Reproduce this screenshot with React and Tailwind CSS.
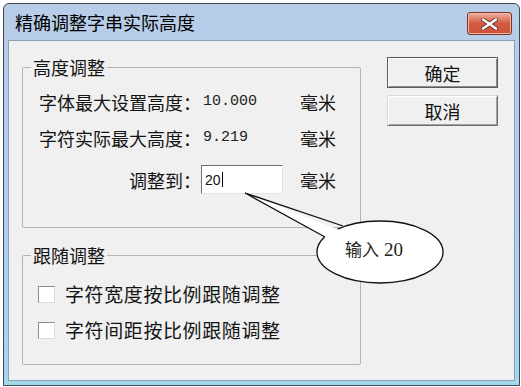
import React from "react";

const CloseX = () => (
  <svg width="17" height="12" viewBox="0 0 17 12">
    <path d="M2 1.5 L15 10.5 M15 1.5 L2 10.5" stroke="#6b3a33" strokeWidth="4.2" strokeLinecap="round" />
    <path d="M2 1.5 L15 10.5 M15 1.5 L2 10.5" stroke="#ffffff" strokeWidth="2.4" strokeLinecap="round" />
  </svg>
);

const Row = ({ label, value, className }) => (
  <div className={`flex items-center h-[24px] ${className}`}>
    <div className="w-[170px] text-right">{label}</div>
    <div className="w-[99px] pl-[2px] font-['Liberation_Mono',monospace] text-[15px] text-[#222]">{value}</div>
    <div>毫米</div>
  </div>
);

const Check = ({ label, className }) => (
  <div className={`flex items-center h-[24px] ml-[7px] ${className}`}>
    <div className="w-[17px] h-[17px] bg-white border border-t-[#8c8c8c] border-l-[#8c8c8c] border-r-[#dcdcdc] border-b-[#dcdcdc]" />
    <span className="ml-[10px] text-[19px] tracking-[0.6px]">{label}</span>
  </div>
);

export default function App() {
  return (
    <div className="relative w-[521px] h-[387px] bg-white pt-[3px] pl-[3px] font-['Noto_Sans_CJK_SC',sans-serif] text-[18px] text-[#141414] leading-[24px]">
      <div className="w-[517px] h-[383px] flex flex-col border border-[#3e4752] rounded-t-[6px] bg-linear-to-b from-[#b7cde8] via-[#b4cdea] to-[#a3d8ea] px-[4px] pb-[4px]">
        {/* title bar */}
        <div className="h-[36px] flex justify-between">
          <div className="pl-[7px] pt-[6px] text-[18px] text-black">精确调整字串实际高度</div>
          <div className="mt-[8px] mr-[3px] w-[45px] h-[23px] rounded-[3px] border border-[#7b3327] bg-linear-to-b from-[#eab0a2] via-[#d25a40] to-[#cf5436] shadow-[inset_0_0_0_1px_#f1b7a8] flex items-center justify-center">
            <CloseX />
          </div>
        </div>

        {/* client area */}
        <div className="flex-1 flex border border-[#8aa0b9] bg-[#f0f0f0]">
          <div className="flex flex-col pl-[13px] pt-[14px] w-[352px]">
            <fieldset className="h-[173px] border border-[#b4b4b4] rounded-[2px] px-[8px]">
              <legend className="px-[2px] leading-[24px]">高度调整</legend>
              <Row label="字体最大设置高度：" value="10.000" className="mt-[11px]" />
              <Row label="字符实际最大高度：" value="9.219" className="mt-[12px]" />
              <div className="flex items-center h-[29px] mt-[15px]">
                <div className="w-[170px] text-right">调整到：</div>
                <div className="w-[99px]">
                  <div className="w-[82px] h-[29px] bg-white border border-t-[#6f6f6f] border-l-[#6f6f6f] border-r-[#e2e2e2] border-b-[#e2e2e2] flex items-center pl-[3px] font-['Liberation_Sans',sans-serif] text-[14px]">
                    20<span className="ml-[1px] w-[1px] h-[15px] bg-black" />
                  </div>
                </div>
                <div>毫米</div>
              </div>
            </fieldset>

            <fieldset className="mt-[15px] h-[122px] border border-[#b4b4b4] rounded-[2px] px-[8px]">
              <legend className="px-[2px] leading-[24px]">跟随调整</legend>
              <Check label="字符宽度按比例跟随调整" className="mt-[15px]" />
              <Check label="字符间距按比例跟随调整" className="mt-[12px]" />
            </fieldset>
          </div>

          <div className="flex flex-col gap-[7px] pt-[16px] ml-[26px]">
            <button className="w-[111px] h-[31px] bg-[#f0f0f0] border border-[#5a5a5a] shadow-[inset_1px_1px_0_#fff,inset_-1px_-1px_0_#8a8a8a] text-[18px] leading-none">
              确定
            </button>
            <button className="w-[111px] h-[31px] bg-[#f0f0f0] border border-t-[#dadada] border-l-[#dadada] border-r-[#6f6f6f] border-b-[#6f6f6f] shadow-[inset_1px_1px_0_#fff,inset_-1px_-1px_0_#a3a3a3] text-[18px] leading-none">
              取消
            </button>
          </div>
        </div>
      </div>

      {/* callout annotation */}
      <svg className="absolute inset-0 pointer-events-none" width="521" height="387">
        <ellipse cx="380" cy="252" rx="63" ry="31" fill="#fff" stroke="#111" strokeWidth="1.3" />
        <polygon points="347,233 245,193 331,241" fill="#fff" />
        <polyline points="343,226 245,193 325,237" fill="none" stroke="#111" strokeWidth="1.3" />
      </svg>
      <div className="absolute left-[345px] top-[237px] text-[17px] leading-[24px] text-[#222]">
        <span>输入</span>
        <span className="ml-[5px] font-['Liberation_Serif',serif] text-[19px]">20</span>
      </div>
    </div>
  );
}
